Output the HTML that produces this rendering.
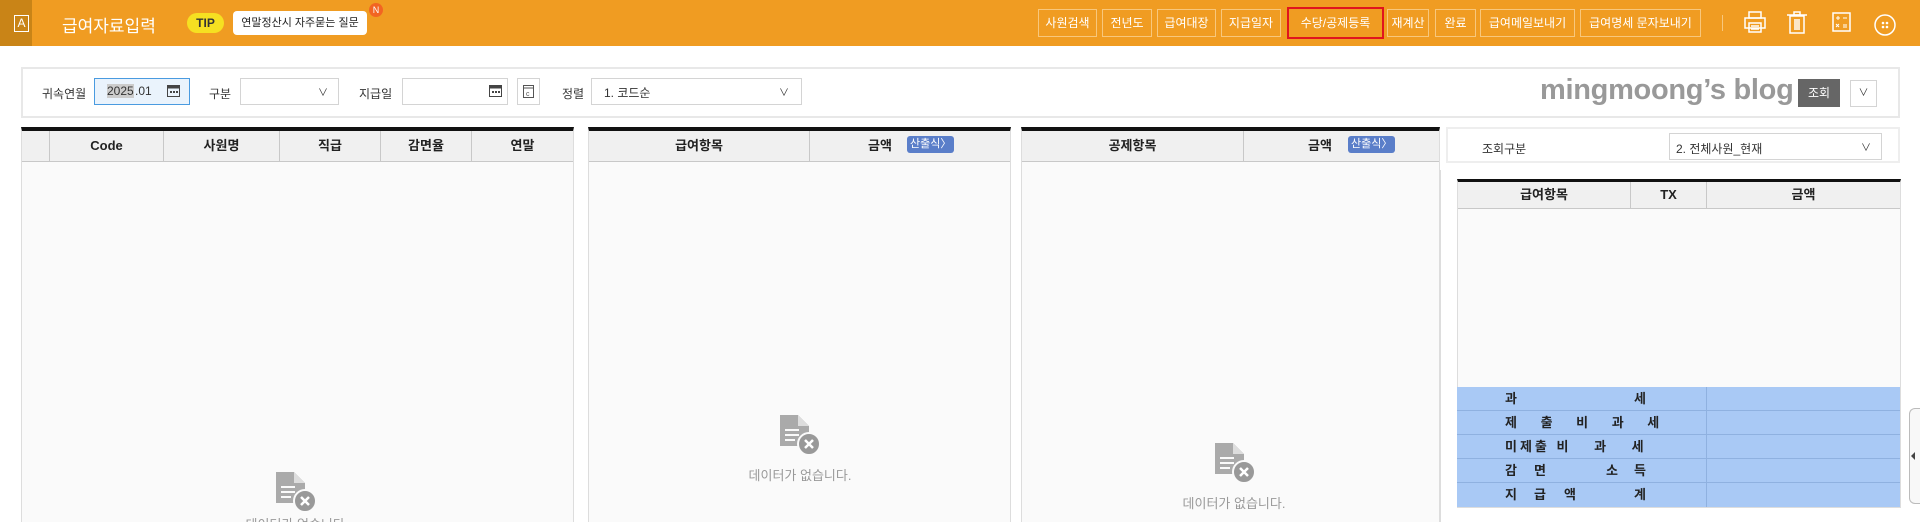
<!DOCTYPE html>
<html style="overflow:hidden;height:522px"><head><meta charset="utf-8"><style>
*{box-sizing:border-box;margin:0;padding:0}
body{width:1920px;height:522px;overflow:hidden;background:#fff;font-family:"Liberation Sans","Noto Sans CJK KR",sans-serif;font-size:12px;color:#333;position:relative}
.a{position:absolute}
.hdr{left:0;top:0;width:1920px;height:46px;background:#f09c22}
.btn{top:9px;height:28px;border:1px solid #f8c77c;color:#fff;font-size:12px;line-height:26px;text-align:center}
.lbl{font-size:12px;color:#333}
.inp{border:1px solid #d4d4d4;background:#fff;height:27px}
.th{background:#f0f0f0;border-bottom:1px solid #c8c8c8;height:31px;font-size:13px;font-weight:bold;color:#222;line-height:30px;text-align:center}
.panel{background:#fafafa;border:1px solid #ddd;border-top:4px solid #111;border-bottom:0}
.badge{background:#5a7ec9;color:#fff;font-size:11px;border-radius:3px;height:17px;line-height:17px;padding:0 3px}
.empty{color:#999;font-size:13px;text-align:center;width:140px}
.row{height:24px;border-bottom:1px solid #8fb1e0;background:#a9c9f5;font-weight:bold;font-size:13px;color:#222;line-height:23px}
</style></head><body>
<div class="a hdr"></div>
<div class="a" style="left:0;top:0;width:32px;height:46px;background:#c98417"></div>
<div class="a" style="left:14px;top:15px;width:15px;height:17px;border:1.5px solid #fff;color:#fff;font-size:12px;line-height:14px;text-align:center">A</div>
<div class="a" style="left:62px;top:12px;color:#fff;font-size:17px">급여자료입력</div>
<div class="a" style="left:187px;top:13px;width:37px;height:20px;border-radius:10px;background:#f6e021;color:#333;font-weight:bold;font-size:12px;line-height:20px;text-align:center">TIP</div>
<div class="a" style="left:233px;top:11px;width:134px;height:24px;border-radius:4px;background:#fff;color:#222;font-size:11px;line-height:24px;text-align:center">연말정산시 자주묻는 질문</div>
<div class="a" style="left:369px;top:3px;width:14px;height:14px;border-radius:7px;background:#f26522;color:#fff;font-size:9px;line-height:14px;text-align:center">N</div>
<div class="a btn" style="left:1038px;width:59px">사원검색</div>
<div class="a btn" style="left:1102px;width:50px">전년도</div>
<div class="a btn" style="left:1157px;width:59px">급여대장</div>
<div class="a btn" style="left:1221px;width:60px">지급일자</div>
<div class="a btn" style="left:1287px;width:97px;border:2px solid #e0141e;top:7px;height:32px;line-height:28px">수당/공제등록</div>
<div class="a btn" style="left:1387px;width:42px">재계산</div>
<div class="a btn" style="left:1435px;width:41px">완료</div>
<div class="a btn" style="left:1480px;width:95px">급여메일보내기</div>
<div class="a btn" style="left:1580px;width:121px">급여명세 문자보내기</div>
<div class="a" style="left:1722px;top:15px;width:1px;height:16px;background:#f8c77c"></div>
<svg class="a" style="left:1740px;top:8px" width="170" height="32" fill="none" stroke="#fff" stroke-width="1.5">
<rect x="9" y="4" width="12" height="6"/><rect x="5" y="10" width="20" height="10"/><rect x="9" y="15" width="12" height="9"/><line x1="11" y1="18" x2="19" y2="18"/><line x1="11" y1="21" x2="19" y2="21"/>
<rect x="50" y="8" width="14" height="17"/><line x1="47" y1="7" x2="67" y2="7"/><rect x="54" y="4" width="6" height="3"/><line x1="55" y1="11" x2="55" y2="22"/><line x1="57" y1="11" x2="57" y2="22"/><line x1="59" y1="11" x2="59" y2="22"/>
<rect x="93" y="5" width="17" height="18"/><path d="M96 10h4M98 8v4M103 10h4M96 16l3 3M99 16l-3 3M103 17h4M103 19h4" stroke-width="1"/>
<circle cx="145" cy="17" r="10"/><g fill="#fff" stroke="none"><circle cx="143" cy="15" r="1.3"/><circle cx="147" cy="15" r="1.3"/><circle cx="143" cy="19" r="1.3"/><circle cx="147" cy="19" r="1.3"/></g>
</svg>

<div class="a" style="left:21px;top:67px;width:1879px;height:51px;border:2px solid #e8e8e8;background:#fff"></div>
<div class="a lbl" style="left:42px;top:85px">귀속연월</div>
<div class="a inp" style="left:94px;top:78px;width:96px;border-color:#4a9be0;background:#eaf3fc"><span style="position:absolute;left:12px;top:5px;background:#ccc;font-size:12px">2025</span><span style="position:absolute;left:40px;top:5px;font-size:12px">.01</span></div>
<svg class="a" style="left:167px;top:84px" width="13" height="13"><rect x="0.5" y="1.5" width="12" height="11" fill="none" stroke="#444"/><rect x="0.5" y="1.5" width="12" height="3" fill="#444"/><g fill="#444"><rect x="3" y="7" width="2" height="2"/><rect x="6" y="7" width="2" height="2"/><rect x="9" y="7" width="2" height="2"/></g></svg>
<div class="a lbl" style="left:209px;top:85px">구분</div>
<div class="a inp" style="left:240px;top:78px;width:99px"><span style="position:absolute;right:10px;top:5px;font-size:10px">∨</span></div>
<div class="a lbl" style="left:359px;top:85px">지급일</div>
<div class="a inp" style="left:402px;top:78px;width:106px"></div>
<svg class="a" style="left:489px;top:84px" width="13" height="13"><rect x="0.5" y="1.5" width="12" height="11" fill="none" stroke="#444"/><rect x="0.5" y="1.5" width="12" height="3" fill="#444"/><g fill="#444"><rect x="3" y="7" width="2" height="2"/><rect x="6" y="7" width="2" height="2"/><rect x="9" y="7" width="2" height="2"/></g></svg>
<div class="a inp" style="left:517px;top:78px;width:23px"><svg style="position:absolute;left:5px;top:6px" width="11" height="13"><rect x="0.5" y="0.5" width="10" height="12" fill="none" stroke="#555"/><line x1="0" y1="3" x2="11" y2="3" stroke="#555"/><text x="3" y="11" font-size="7" fill="#555">c</text></svg></div>
<div class="a lbl" style="left:562px;top:85px">정렬</div>
<div class="a inp" style="left:591px;top:78px;width:211px"><span style="position:absolute;left:12px;top:5px">1. 코드순</span><span style="position:absolute;right:12px;top:5px;font-size:10px">∨</span></div>
<div class="a" style="left:1540px;top:74px;font-size:29px;font-weight:bold;color:#999;letter-spacing:-0.3px">mingmoong’s blog</div>
<div class="a" style="left:1798px;top:79px;width:42px;height:28px;background:#666;color:#fff;line-height:28px;text-align:center">조회</div>
<div class="a inp" style="left:1850px;top:80px;width:27px;height:27px;text-align:center;line-height:25px;font-size:10px">∨</div>

<!-- table1 -->
<div class="a panel" style="left:21px;top:127px;width:553px;height:395px"></div>
<div class="a th" style="left:22px;top:131px;width:551px"></div>
<div class="a" style="left:49px;top:131px;width:1px;height:31px;background:#c8c8c8"></div>
<div class="a" style="left:163px;top:131px;width:1px;height:31px;background:#c8c8c8"></div>
<div class="a" style="left:279px;top:131px;width:1px;height:31px;background:#c8c8c8"></div>
<div class="a" style="left:380px;top:131px;width:1px;height:31px;background:#c8c8c8"></div>
<div class="a" style="left:471px;top:131px;width:1px;height:31px;background:#c8c8c8"></div>
<div class="a th" style="left:50px;top:131px;width:113px;background:none;border:0">Code</div>
<div class="a th" style="left:164px;top:131px;width:115px;background:none;border:0">사원명</div>
<div class="a th" style="left:280px;top:131px;width:100px;background:none;border:0">직급</div>
<div class="a th" style="left:381px;top:131px;width:90px;background:none;border:0">감면율</div>
<div class="a th" style="left:472px;top:131px;width:101px;background:none;border:0">연말</div>

<!-- table2 -->
<div class="a panel" style="left:588px;top:127px;width:423px;height:395px"></div>
<div class="a th" style="left:589px;top:131px;width:421px"></div>
<div class="a" style="left:809px;top:131px;width:1px;height:31px;background:#c8c8c8"></div>
<div class="a th" style="left:589px;top:131px;width:220px;background:none;border:0">급여항목</div>
<div class="a th" style="left:865px;top:131px;width:30px;background:none;border:0">금액</div>
<div class="a badge" style="left:907px;top:136px">산출식〉</div>

<!-- table3 -->
<div class="a panel" style="left:1021px;top:127px;width:419px;height:395px"></div>
<div class="a th" style="left:1022px;top:131px;width:417px"></div>
<div class="a" style="left:1243px;top:131px;width:1px;height:31px;background:#c8c8c8"></div>
<div class="a th" style="left:1022px;top:131px;width:221px;background:none;border:0">공제항목</div>
<div class="a th" style="left:1305px;top:131px;width:30px;background:none;border:0">금액</div>
<div class="a badge" style="left:1348px;top:136px">산출식〉</div>

<!-- empty icons -->
<svg class="a" style="left:777px;top:412px" width="46" height="44"><path d="M3 3h18l11 11v20H3z" fill="#aaa"/><path d="M21 3v11h11" fill="#ddd"/><path d="M8 18h14M8 23h14M8 28h10" stroke="#fafafa" stroke-width="2"/><circle cx="32" cy="32" r="11" fill="#999" stroke="#fafafa" stroke-width="2"/><path d="M28 28l8 8M36 28l-8 8" stroke="#fff" stroke-width="2.5"/></svg>
<div class="a empty" style="left:730px;top:465px">데이터가 없습니다.</div>
<svg class="a" style="left:1212px;top:440px" width="46" height="44"><path d="M3 3h18l11 11v20H3z" fill="#aaa"/><path d="M21 3v11h11" fill="#ddd"/><path d="M8 18h14M8 23h14M8 28h10" stroke="#fafafa" stroke-width="2"/><circle cx="32" cy="32" r="11" fill="#999" stroke="#fafafa" stroke-width="2"/><path d="M28 28l8 8M36 28l-8 8" stroke="#fff" stroke-width="2.5"/></svg>
<div class="a empty" style="left:1164px;top:493px">데이터가 없습니다.</div>
<svg class="a" style="left:273px;top:469px" width="46" height="44"><path d="M3 3h18l11 11v20H3z" fill="#aaa"/><path d="M21 3v11h11" fill="#ddd"/><path d="M8 18h14M8 23h14M8 28h10" stroke="#fafafa" stroke-width="2"/><circle cx="32" cy="32" r="11" fill="#999" stroke="#fafafa" stroke-width="2"/><path d="M28 28l8 8M36 28l-8 8" stroke="#fff" stroke-width="2.5"/></svg>
<div class="a empty" style="left:227px;top:514px">데이터가 없습니다.</div>

<!-- right -->
<div class="a" style="left:1446px;top:127px;width:454px;height:36px;border:2px solid #eee;background:#fff"></div>
<div class="a lbl" style="left:1482px;top:140px">조회구분</div>
<div class="a inp" style="left:1669px;top:133px;width:213px"><span style="position:absolute;left:6px;top:6px;font-size:12px">2. 전체사원_현재</span><span style="position:absolute;right:10px;top:5px;font-size:10px">∨</span></div>
<div class="a" style="left:1440px;top:170px;width:6px;height:352px;background:#fff;border-left:1px solid #ddd"></div>
<div class="a panel" style="left:1457px;top:179px;width:444px;height:329px;border-top:3px solid #111;border-bottom:1px solid #ddd"></div>
<div class="a th" style="left:1458px;top:182px;width:442px;height:27px;line-height:26px"></div>
<div class="a" style="left:1630px;top:182px;width:1px;height:27px;background:#c8c8c8"></div>
<div class="a" style="left:1706px;top:182px;width:1px;height:27px;background:#c8c8c8"></div>
<div class="a th" style="left:1458px;top:182px;width:172px;height:27px;line-height:26px;background:none;border:0">급여항목</div>
<div class="a th" style="left:1631px;top:182px;width:75px;height:27px;line-height:26px;background:none;border:0">TX</div>
<div class="a th" style="left:1707px;top:182px;width:193px;height:27px;line-height:26px;background:none;border:0">금액</div>
<div class="a" style="left:1457px;top:387px;width:443px">
<div class="row" style="position:relative"><span class="a" style="left:48px">과</span><span class="a" style="left:177px">세</span></div>
<div class="row" style="position:relative"><span class="a" style="left:48px;word-spacing:20px">제 출 비 과 세</span></div>
<div class="row" style="position:relative"><span class="a" style="left:48px;letter-spacing:3px">미제출 <span style="word-spacing:16px">비 과 세</span></span></div>
<div class="row" style="position:relative"><span class="a" style="left:48px">감</span><span class="a" style="left:77px">면</span><span class="a" style="left:149px">소</span><span class="a" style="left:177px">득</span></div>
<div class="row" style="position:relative;border:0"><span class="a" style="left:48px">지</span><span class="a" style="left:77px">급</span><span class="a" style="left:107px">액</span><span class="a" style="left:177px">계</span></div>
</div>
<div class="a" style="left:1706px;top:387px;width:1px;height:120px;background:#8fb1e0"></div>
<div class="a" style="left:1909px;top:408px;width:12px;height:96px;border:1px solid #bbb;border-right:0;border-radius:6px 0 0 6px;background:#f8f8f8"></div>
<div class="a" style="left:1911px;top:452px;width:0;height:0;border-top:4px solid transparent;border-bottom:4px solid transparent;border-right:4px solid #444"></div>
</body></html>
